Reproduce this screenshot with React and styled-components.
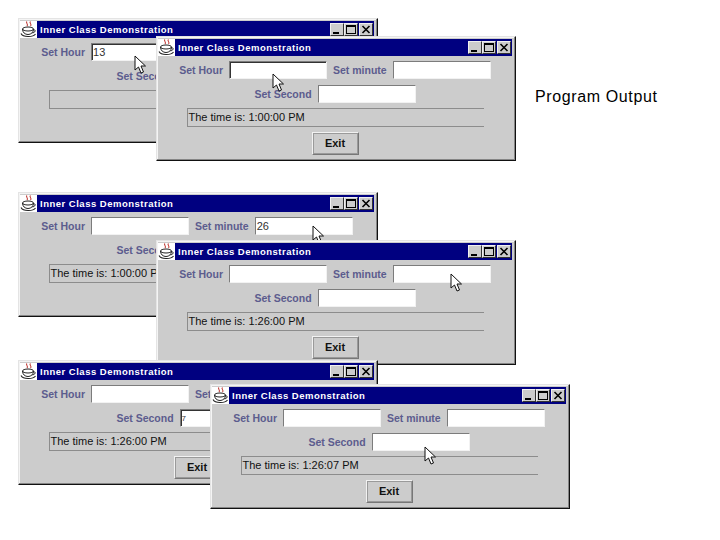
import React from 'react';
import styled, { createGlobalStyle } from 'styled-components';

const GlobalStyle = createGlobalStyle`
  html, body {
    margin: 0;
    background: #fff;
    font-family: "Liberation Sans", Arial, sans-serif;
  }
`;

const Page = styled.div`
  width: 720px;
  height: 540px;
  display: flex;
  overflow: hidden;
`;

const Desktop = styled.div`
  flex: 0 0 535px;
  height: 540px;
  position: relative;
`;

const Caption = styled.div`
  padding-top: 88px;
  font-size: 16px;
  line-height: 18px;
  color: #000;
  letter-spacing: 0.62px;
  white-space: nowrap;
`;

const Frame = styled.section`
  position: absolute;
  left: ${props => props.$x}px;
  top: ${props => props.$y}px;
  width: 360px;
  height: 125px;
  box-sizing: border-box;
  padding: 2px 3px 2px 1px;
  background: #cccccc;
  border-top: 1px solid #e4e4e4;
  border-left: 1px solid #e4e4e4;
  border-right: 1px solid #111;
  border-bottom: 1px solid #111;
  box-shadow: inset -1px -1px 0 #858585, inset 1px 1px 0 #f4f4f4;
`;

const TitleBar = styled.header`
  height: 17px;
  display: flex;
  align-items: center;
  background: #000080;
  padding-right: 1px;
`;

const TitleText = styled.span`
  flex: 1;
  margin-left: 3px;
  color: #fff;
  font-size: 9.5px;
  font-weight: bold;
  letter-spacing: 0.5px;
  white-space: nowrap;
`;

const TitleButton = styled.div`
  width: 14px;
  height: 13px;
  box-sizing: border-box;
  margin-left: ${props => props.$gap || 0}px;
  background: #cccccc;
  border: 1px solid;
  border-color: #f0f0f0 #333 #333 #f0f0f0;
  display: flex;
  align-items: center;
  justify-content: center;
`;

const Row = styled.div`
  display: flex;
  justify-content: center;
  align-items: center;
  gap: 6px;
  margin-top: ${props => props.$top}px;
`;

const FieldLabel = styled.label`
  color: #5c5c8e;
  font-size: 10.5px;
  font-weight: bold;
  white-space: nowrap;
`;

const Field = styled.div`
  width: 98px;
  height: 18px;
  box-sizing: border-box;
  padding-left: 1px;
  background: #fff;
  border-style: solid;
  border-width: 1px;
  border-color: #7c7c7c #f2f2f2 #f2f2f2 #7c7c7c;
  box-shadow: ${props => (props.$focused ? 'inset 1px 1px 0 #333' : 'none')};
  color: #333;
  font-size: ${props => (props.$small ? 8 : 11)}px;
  line-height: 17px;
`;

const TimeLabel = styled.div`
  width: 297px;
  height: 19px;
  box-sizing: border-box;
  margin: 5px auto 0;
  padding-left: 1px;
  border-top: 1px solid #8c8c8c;
  border-left: 1px solid #8c8c8c;
  border-bottom: 1px solid #8c8c8c;
  color: #111;
  font-size: 11px;
  line-height: 17px;
  white-space: nowrap;
`;

const ExitButton = styled.button`
  display: block;
  width: 47px;
  height: 23px;
  margin: 5px auto 0;
  padding: 0 0 1px;
  background: #cccccc;
  border: 1px solid;
  border-color: #f2f2f2 #777 #777 #f2f2f2;
  outline: 1px solid #9a9a9a;
  outline-offset: -2px;
  color: #111;
  font-family: inherit;
  font-size: 11px;
  font-weight: bold;
`;

const Pointer = styled.svg`
  position: absolute;
  left: ${props => props.$x}px;
  top: ${props => props.$y}px;
  width: 13px;
  height: 19px;
`;

function JavaIcon() {
  return (
    <svg width="17" height="17" viewBox="0 0 17 17">
      <rect width="17" height="17" fill="#fff" />
      <path d="M7 0.5 C5 2 9 3 7 5 M10.5 0.5 C8.5 2 12.5 3 10.5 5" fill="none" stroke="#c2403c" strokeWidth="1.1" />
      <ellipse cx="8" cy="8" rx="5.5" ry="2" fill="none" stroke="#222" strokeWidth="1" />
      <path d="M2.5 8 C2.5 11.5 5 13.5 8 13.5 C11 13.5 13.5 11.5 13.5 8 M13.5 9 C16 8.5 16 11 12.5 12" fill="none" stroke="#222" strokeWidth="1" />
      <path d="M1 12.5 C3 16.5 13 16.5 15.5 13" fill="none" stroke="#222" strokeWidth="1.1" />
    </svg>
  );
}

function WindowButtons() {
  return (
    <>
      <TitleButton>
        <svg width="10" height="9" viewBox="0 0 10 9"><rect x="1" y="7" width="6" height="2" fill="#000" /></svg>
      </TitleButton>
      <TitleButton>
        <svg width="10" height="9" viewBox="0 0 10 9"><rect x="0.5" y="0.5" width="9" height="8" fill="none" stroke="#000" /><rect x="0" y="0" width="10" height="2" fill="#000" /></svg>
      </TitleButton>
      <TitleButton $gap={1}>
        <svg width="10" height="9" viewBox="0 0 10 9"><path d="M1.5 1 L8.5 8 M8.5 1 L1.5 8" stroke="#000" strokeWidth="1.6" /></svg>
      </TitleButton>
    </>
  );
}

function AppWindow({ x, y, hour, minute, second, time, focus, pointer }) {
  return (
    <Frame $x={x} $y={y}>
      <TitleBar>
        <JavaIcon />
        <TitleText>Inner Class Demonstration</TitleText>
        <WindowButtons />
      </TitleBar>
      <Row $top={5}>
        <FieldLabel>Set Hour</FieldLabel>
        <Field $focused={focus === 'hour'}>{hour}</Field>
        <FieldLabel>Set minute</FieldLabel>
        <Field $focused={focus === 'minute'}>{minute}</Field>
      </Row>
      <Row $top={6}>
        <FieldLabel>Set Second</FieldLabel>
        <Field $focused={focus === 'second'} $small>{second}</Field>
      </Row>
      <TimeLabel>{time}</TimeLabel>
      <ExitButton>Exit</ExitButton>
      {pointer && (
        <Pointer $x={pointer[0]} $y={pointer[1]} viewBox="0 0 13 19">
          <path d="M1 1 L1 15 L4.5 12 L7 18 L9.5 17 L7 11 L11.5 11 Z" fill="#fff" stroke="#111" strokeWidth="1" />
        </Pointer>
      )}
    </Frame>
  );
}

const windows = [
  { x: 18, y: 18, hour: '13', focus: 'hour', time: '', pointer: [115, 36] },
  { x: 156, y: 36, focus: 'hour', time: 'The time is: 1:00:00 PM', pointer: [115, 36] },
  { x: 18, y: 192, minute: '26', time: 'The time is: 1:00:00 PM', pointer: [293, 32] },
  { x: 156, y: 240, time: 'The time is: 1:26:00 PM', pointer: [293, 32] },
  { x: 18, y: 360, second: '7', focus: 'second', time: 'The time is: 1:26:00 PM' },
  { x: 210, y: 384, time: 'The time is: 1:26:07 PM', pointer: [213, 61] },
];

export default function App() {
  return (
    <>
      <GlobalStyle />
      <Page>
        <Desktop>
          {windows.map(win => (
            <AppWindow key={`${win.x}-${win.y}`} {...win} />
          ))}
        </Desktop>
        <Caption>Program Output</Caption>
      </Page>
    </>
  );
}
